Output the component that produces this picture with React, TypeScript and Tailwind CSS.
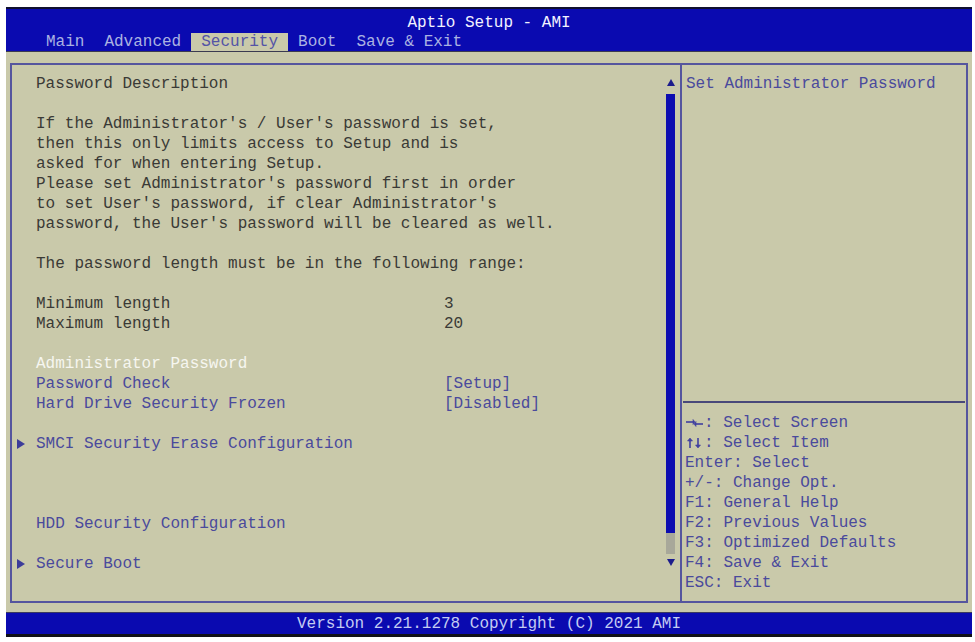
import React from 'react';

type Row = {
  text?: string;
  value?: string;
  kind?: 'info' | 'item' | 'selected';
  submenu?: boolean;
};

const rows: Row[] = [
  { text: 'Password Description' },
  {},
  { text: "If the Administrator's / User's password is set," },
  { text: 'then this only limits access to Setup and is' },
  { text: 'asked for when entering Setup.' },
  { text: "Please set Administrator's password first in order" },
  { text: "to set User's password, if clear Administrator's" },
  { text: "password, the User's password will be cleared as well." },
  {},
  { text: 'The password length must be in the following range:' },
  {},
  { text: 'Minimum length', value: '3' },
  { text: 'Maximum length', value: '20' },
  {},
  { text: 'Administrator Password', kind: 'selected' },
  { text: 'Password Check', value: '[Setup]', kind: 'item' },
  { text: 'Hard Drive Security Frozen', value: '[Disabled]', kind: 'item' },
  {},
  { text: 'SMCI Security Erase Configuration', kind: 'item', submenu: true },
  {},
  {},
  {},
  { text: 'HDD Security Configuration', kind: 'item' },
  {},
  { text: 'Secure Boot', kind: 'item', submenu: true },
];

const help: [('lr' | 'ud' | null), string][] = [
  ['lr', ': Select Screen'],
  ['ud', ': Select Item'],
  [null, 'Enter: Select'],
  [null, '+/-: Change Opt.'],
  [null, 'F1: General Help'],
  [null, 'F2: Previous Values'],
  [null, 'F3: Optimized Defaults'],
  [null, 'F4: Save & Exit'],
  [null, 'ESC: Exit'],
];

const tabs = ['Main', 'Advanced', 'Security', 'Boot', 'Save & Exit'];

function rowColor(kind?: Row['kind']) {
  if (kind === 'selected') return 'text-[#f6f6f0]';
  if (kind === 'item') return 'text-[#4a4a9c]';
  return 'text-[#3a3a36]';
}

// the BIOS arrow-key glyphs, two character cells wide
function KeyArrows({ dir }: { dir: 'lr' | 'ud' }) {
  return (
    <svg width="19" height="20" viewBox="0 0 19 20" className="shrink-0">
      {dir === 'lr' ? (
        <g stroke="#4040a0" strokeWidth="1.6" fill="#4040a0">
          <line x1="1" y1="9" x2="8" y2="9" />
          <polygon points="8,6.5 10,9 8,11.5" strokeWidth="0.6" />
          <line x1="11" y1="11" x2="18" y2="11" />
          <polygon points="11,8.5 9,11 11,13.5" strokeWidth="0.6" />
        </g>
      ) : (
        <g stroke="#4040a0" strokeWidth="1.6" fill="#4040a0">
          <line x1="5" y1="7" x2="5" y2="15" />
          <polygon points="2.5,8 5,5 7.5,8" strokeWidth="0.6" />
          <line x1="13" y1="5" x2="13" y2="13" />
          <polygon points="10.5,12 13,15 15.5,12" strokeWidth="0.6" />
        </g>
      )}
    </svg>
  );
}

export default function App() {
  return (
    <div
      className="w-[975px] h-[642px] bg-white pt-[7px] px-[6px] overflow-hidden"
      style={{ fontFamily: '"Liberation Mono", "DejaVu Sans Mono", monospace' }}
    >
      <div className="w-[966px] flex flex-col text-[16px] leading-[20px] whitespace-pre">
        {/* header */}
        <div className="h-[44px] bg-[#0a0ab0] border-t-2 border-[#101030] flex flex-col pt-[4px]">
          <div className="h-[20px] text-center text-[#f2f2ff]">Aptio Setup - AMI</div>
          <div className="h-[18px] flex pl-[30px] leading-[18px]">
            {tabs.map((t) =>
              t === 'Security' ? (
                <div key={t} className="px-[10px] bg-[#c9c9aa] text-[#5454a6]">
                  {t}
                </div>
              ) : (
                <div key={t} className="px-[10px] text-[#aab2e2]">
                  {t}
                </div>
              )
            )}
          </div>
        </div>

        {/* body */}
        <div className="h-[561px] bg-[#c9c9aa] pt-[11px] px-[4px] pb-[9px] border-t border-[#3a3a50]">
          <div className="h-full border-2 border-[#55559e] flex">
            {/* left */}
            <div className="w-[668px] flex">
              <div className="flex-1 pt-[9px]">
                {rows.map((r, i) => (
                  <div key={i} className={`h-[20px] flex ${rowColor(r.kind)}`}>
                    <div className="w-[24px] flex items-center pl-[5px]">
                      {r.submenu && (
                        <svg width="8" height="10" viewBox="0 0 8 10">
                          <polygon points="0,0 8,5 0,10" fill="#3c3c9a" />
                        </svg>
                      )}
                    </div>
                    <div className={r.value ? 'w-[408px]' : ''}>{r.text ?? ''}</div>
                    {r.value && <div>{r.value}</div>}
                  </div>
                ))}
              </div>
              {/* scrollbar */}
              <div className="w-[9px] mr-[5px] pt-[14px] pb-[35px] flex flex-col items-center">
                <svg width="8" height="7" viewBox="0 0 8 7" className="mb-[8px]">
                  <polygon points="4,0 8,7 0,7" fill="#1c1c8c" />
                </svg>
                <div className="w-[9px] flex-1 bg-[#0c0cb0]" />
                <div className="w-[9px] h-[21px] bg-[#a8a89a]" />
                <svg width="8" height="7" viewBox="0 0 8 7" className="mt-[5px]">
                  <polygon points="0,0 8,0 4,7" fill="#1c1c8c" />
                </svg>
              </div>
            </div>
            {/* divider */}
            <div className="w-[2px] bg-[#55559e]" />
            {/* right */}
            <div className="flex-1 flex flex-col">
              <div className="flex-1 pt-[9px] pl-[4px] text-[#4a4a9c]">Set Administrator Password</div>
              <div className="mx-[1px] h-[2px] bg-[#48487a]" />
              <div className="h-[198px] pt-[10px] pl-[3px] text-[#4a4a9c]">
                {help.map(([k, h]) => (
                  <div key={h} className="h-[20px] flex">
                    {k && <KeyArrows dir={k} />}
                    <span>{h}</span>
                  </div>
                ))}
              </div>
            </div>
          </div>
        </div>

        {/* footer */}
        <div className="h-[22px] bg-[#0a0ab0] text-center text-[#c4ccf2] leading-[22px] border-t border-[#3a3a60]">
          Version 2.21.1278 Copyright (C) 2021 AMI
        </div>
        <div className="h-[3px] bg-[#101018]" />
      </div>
    </div>
  );
}
